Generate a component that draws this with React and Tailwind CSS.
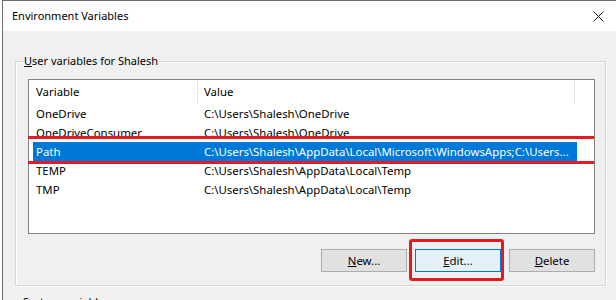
import React from "react";

const rows = [
  ["OneDrive", "C:\\Users\\Shalesh\\OneDrive"],
  ["OneDriveConsumer", "C:\\Users\\Shalesh\\OneDrive"],
  ["Path", "C:\\Users\\Shalesh\\AppData\\Local\\Microsoft\\WindowsApps;C:\\Users..."],
  ["TEMP", "C:\\Users\\Shalesh\\AppData\\Local\\Temp"],
  ["TMP", "C:\\Users\\Shalesh\\AppData\\Local\\Temp"],
];

function Btn({ children, active }) {
  return (
    <div
      className={
        "w-[86px] h-[23px] flex items-center justify-center border text-[11.4px] " +
        (active ? "bg-[#e5f1fb] border-[#0078d7]" : "bg-[#e1e1e1] border-[#adadad]")
      }
    >
      {children}
    </div>
  );
}

export default function App() {
  return (
    <div className="w-[616px] h-[300px] overflow-hidden bg-white flex relative font-['Noto_Sans',sans-serif] text-[11px] leading-[16px] text-black">
      <div className="w-[2px] shrink-0 bg-white" />
      <div className="flex-1 flex flex-col border-l border-t border-[#6b6b6b]">
        <div className="h-[30px] bg-white flex items-center justify-between pl-[9px] pr-[12px] shrink-0">
          <span className="text-[11px]">Environment Variables</span>
          <svg width="11" height="11" viewBox="0 0 11 11">
            <path d="M0.5 0.5 L10.5 10.5 M10.5 0.5 L0.5 10.5" stroke="#111" strokeWidth="1" />
          </svg>
        </div>
        <div className="flex-1 bg-[#f0f0f0] pl-[12px] pt-[30px]">
          <div className="relative w-[591px] border border-[#d6d6d6] shadow-[inset_1px_1px_0_#ffffff,1px_1px_0_#ffffff] pl-[12px] pt-[17px] pb-[13px]">
            <span className="absolute left-[8px] top-[-9px] bg-[#f0f0f0] pr-[1px]">
              <span className="underline">U</span>ser variables for Shalesh
            </span>
            <div className="w-[567px] h-[155px] border border-[#828282] bg-white flex flex-col text-[11.4px]">
              <div className="h-[24px] flex items-center shrink-0">
                <div className="w-[168px] pl-[7px] shrink-0">Variable</div>
                <div className="w-px h-[24px] bg-[#e5e5e5] shrink-0" />
                <div className="w-[376px] pl-[6px] shrink-0">Value</div>
                <div className="w-px h-[24px] bg-[#e5e5e5] shrink-0" />
              </div>
              {rows.map(([k, v]) => {
                const sel = k === "Path";
                return (
                  <div key={k} className="h-[19px] flex pl-[4px] shrink-0">
                    <div
                      className={
                        "w-[544px] flex items-center overflow-hidden " +
                        (sel ? "bg-[#0078d7] text-white" : "")
                      }
                    >
                      <div className="w-[165px] pl-[3px] whitespace-nowrap shrink-0">{k}</div>
                      <div className="pl-[6px] whitespace-nowrap">{v}</div>
                    </div>
                  </div>
                );
              })}
            </div>
            <div className="mt-[15px] w-[567px] flex justify-end gap-[8px]">
              <Btn>
                <span className="underline">N</span>ew...
              </Btn>
              <Btn active>
                <span className="underline">E</span>dit...
              </Btn>
              <Btn>
                <span className="underline">D</span>elete
              </Btn>
            </div>
          </div>
          <div className="mt-[8px] pl-[8px]">System variables</div>
        </div>
      </div>
      <div className="absolute left-[28px] top-[136px] w-[566px] h-[3px] bg-[#e41b23]" />
      <div className="absolute left-[28px] top-[161px] w-[566px] h-[3px] bg-[#e41b23]" />
      <div className="absolute left-[409px] top-[239px] w-[95px] h-[42px] border-[3px] border-[#e41b23] rounded-[3px]" />
    </div>
  );
}
